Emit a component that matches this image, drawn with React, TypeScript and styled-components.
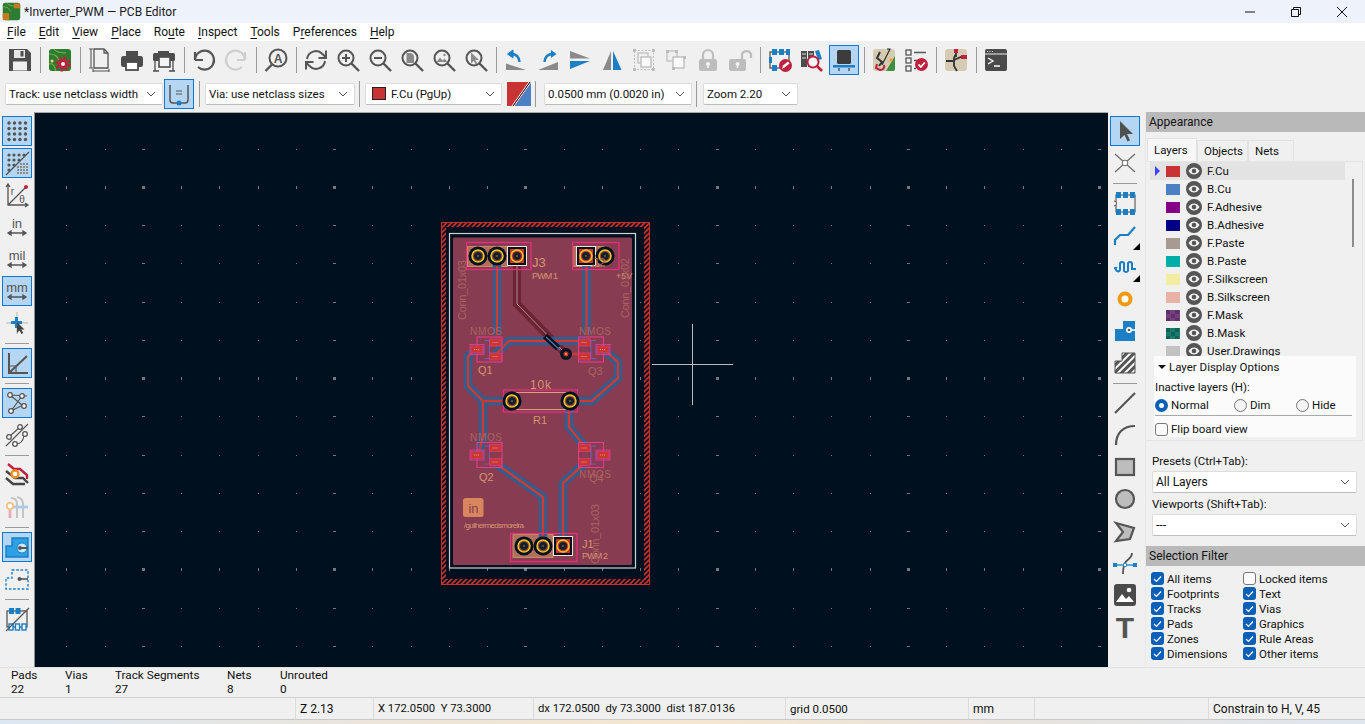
import React from "react";
import styled, { createGlobalStyle } from "styled-components";

const G = "#555555";
const B = "#1a7fc4";
const R = "#c0203f";
const L = "#bdbdbd";
const FONT = `Roboto, "Liberation Sans", sans-serif`;

const Global = createGlobalStyle`
  html, body { margin: 0; padding: 0; background: #f0f0f0; overflow: hidden; }
  * { box-sizing: border-box; }
`;

const Shell = styled.div`
  width: 1365px; height: 724px; display: flex; flex-direction: column; overflow: hidden;
  font: 12px/16px ${FONT}; color: #111; background: #f0f0f0;
`;
const TitleBar = styled.div`
  height: 23px; flex: none; display: flex; align-items: center; padding-left: 2px; background: #eef2fb; font-size: 12px;
`;
const TitleText = styled.span`
  margin-left: 3px; flex: 1; color: #1a1a1a;
`;
const WinButton = styled.div`
  width: 46px; height: 23px; display: flex; align-items: center; justify-content: center;
`;
const MenuBar = styled.div`
  height: 18px; flex: none; background: #fff; display: flex; align-items: center; padding-left: 7px; gap: 13px; font-size: 12px;
  u { text-underline-offset: 2px; }
`;
const ToolRow = styled.div<{ $h: number; $pad: string }>`
  height: ${p => p.$h}px; flex: none; display: flex; align-items: center; padding: ${p => p.$pad}; background: #f0f0f0;
`;
const Sep = styled.div`
  width: 8px; height: 26px; flex: none; display: flex; justify-content: center;
  &::before { content: ""; width: 1px; background: #9a9a9a; }
`;
const HSep = styled.div`
  height: 8px; width: 32px; flex: none; display: flex; align-items: center; padding: 0 4px;
  &::before { content: ""; height: 1px; flex: 1; background: #9a9a9a; }
`;
const ToolButton = styled.div<{ $on?: boolean; $corner?: boolean }>`
  position: relative; width: 32px; height: 32px; flex: none; display: flex; align-items: center; justify-content: center;
  svg { display: block; }
  ${p => p.$on && `
    &::before { content: ""; position: absolute; inset: 1px; background: #b4d6f3; border: 1px solid #0a78d4; }
    svg { position: relative; }
  `}
  ${p => p.$corner && `
    &::after { content: ""; position: absolute; right: 1px; bottom: 1px; border-style: solid; border-width: 0 0 7px 7px; border-color: transparent transparent #000 transparent; }
  `}
`;
const Combo = styled.div<{ $w: number; $ml?: number }>`
  width: ${p => p.$w}px; margin-left: ${p => p.$ml ?? 0}px; height: 22px; flex: none; background: #fff; border: 1px solid #dcdcdc; border-bottom-color: #bdbdbd;
  border-radius: 2px; display: flex; align-items: center; padding: 0 6px 0 3px; gap: 5px; font-size: 11.5px; white-space: nowrap; overflow: hidden;
`;
const ComboText = styled.span`
  flex: 1;
`;
const Swatch = styled.span<{ $c: string }>`
  width: 14px; height: 13px; flex: none; background: ${p => p.$c}; border: 1px solid #222; margin-left: 3px;
`;
const PairSwatch = styled.div`
  width: 24px; height: 24px; margin-left: 5px; flex: none;
`;
const Main = styled.div`
  height: 555px; flex: none; display: flex;
`;
const SideBar = styled.div<{ $w: number }>`
  width: ${p => p.$w}px; flex: none; display: flex; flex-direction: column; align-items: flex-start; padding: 3px 0 0 1px; background: #f0f0f0;
`;
const Canvas = styled.div`
  width: 1074px; flex: none; background: #00101f; border-top: 1px solid #a8a8a8; border-left: 1px solid #8f8f8f; overflow: hidden;
  svg { display: block; }
`;
const Panel = styled.div`
  width: 220px; flex: none; display: flex; flex-direction: column; border-left: 1px solid #e8e8e8;
`;
const PanelHead = styled.div<{ $mt?: number }>`
  height: 20px; flex: none; background: #b9b9b9; display: flex; align-items: center; padding-left: 3px; font-size: 12px; margin-top: ${p => p.$mt ?? 0}px;
`;
const Tabs = styled.div`
  display: flex; align-items: flex-end; height: 29px; padding-left: 1px; flex: none;
`;
const Tab = styled.div<{ $on?: boolean; $w: number }>`
  width: ${p => p.$w}px; height: ${p => (p.$on ? 23 : 21)}px; display: flex; align-items: center; padding-left: 6px; font-size: 11.5px;
  background: ${p => (p.$on ? "#f7f7f7" : "#f0f0f0")}; border: 1px solid #e2e2e2; border-bottom: 0;
`;
const TabBody = styled.div`
  width: 217px; height: 280px; flex: none; border: 1px solid #e4e4e4; border-left: 0; padding: 0 0 0 4px; display: flex; flex-direction: column;
`;
const LayerList = styled.div`
  position: relative; height: 194px; flex: none; overflow: hidden;
`;
const LayerRow = styled.div<{ $on?: boolean }>`
  width: 195px; height: 18px; display: flex; align-items: center; font-size: 11.5px; background: ${p => (p.$on ? "#e3e3e3" : "transparent")};
`;
const Arrow = styled.span<{ $on?: boolean }>`
  width: 16px; flex: none; padding-left: 5px; display: flex;
  &::before { content: ""; border-style: solid; border-width: 5px 0 5px 5px; border-color: transparent transparent transparent ${p => (p.$on ? "#4040ff" : "transparent")}; }
`;
const LayerSwatch = styled.span<{ $c: string; $check?: string }>`
  width: 14px; height: 11px; flex: none; margin-right: 6px; background-color: ${p => p.$c};
  ${p => p.$check && `background-image: conic-gradient(${p.$check} 25%, transparent 0 50%, ${p.$check} 0 75%, transparent 0); background-size: 9px 8px;`}
`;
const LayerName = styled.span`
  margin-left: 5px;
`;
const ScrollThumb = styled.div`
  position: absolute; left: 202px; top: 17px; width: 2px; height: 68px; background: #8d8d8d;
`;
const Options = styled.div`
  width: 202px; margin-left: 4px; height: 81px; flex: none; background: #fbfbfb; padding-left: 1px; font-size: 11.5px; display: flex; flex-direction: column;
`;
const OptHead = styled.div`
  height: 17px; display: flex; align-items: center; gap: 3px; padding-left: 3px; margin-top: 3px;
  &::before { content: ""; border-style: solid; border-width: 4px 4px 0; border-color: #111 transparent transparent; }
`;
const OptLabel = styled.div`
  margin-top: 3px; height: 16px; line-height: 18px;
`;
const RadioRow = styled.div`
  display: flex; height: 18px; align-items: center; margin-top: 3px;
`;
const RadioItem = styled.div<{ $w: number }>`
  width: ${p => p.$w}px; display: flex; align-items: center; gap: 3px;
`;
const Radio = styled.span<{ $on?: boolean }>`
  width: 13px; height: 13px; border-radius: 50%; flex: none;
  ${p => p.$on ? `border: 4px solid #0a5fb8; background: #fff;` : `border: 1px solid #777; background: #f4f4f4;`}
`;
const Rule = styled.div`
  height: 1px; background: #a9a9a9; margin: 2px 4px 0 0;
`;
const CheckBox = styled.span<{ $on?: boolean }>`
  width: 13px; height: 13px; border-radius: 3px; flex: none; display: flex; align-items: center; justify-content: center;
  ${p => p.$on ? `background: #0a5fb8;` : `background: #fbfbfb; border: 1px solid #777;`}
`;
const FlipRow = styled.div`
  display: flex; align-items: center; gap: 3px; margin-top: 5px;
`;
const FieldLabel = styled.div<{ $mt: number }>`
  padding-left: 6px; margin-top: ${p => p.$mt}px; height: 17px; font-size: 11.5px;
`;
const PanelCombo = styled(Combo)`
  margin: 1px 0 0 6px; font-size: 12px; padding-left: 3px;
`;
const FilterGrid = styled.div`
  display: grid; grid-template-columns: 92px 1fr; grid-auto-rows: 15px; padding: 5px 0 0 5px; font-size: 11.5px;
`;
const FilterItem = styled.div`
  display: flex; align-items: center; gap: 3px;
`;
const MsgPanel = styled.div`
  height: 30px; flex: none; display: flex; padding-left: 11px; border-top: 1px solid #e2e2e2; font-size: 11.75px; line-height: 14px;
`;
const MsgCol = styled.div<{ $w: number }>`
  width: ${p => p.$w}px; flex: none;
`;
const StatusBar = styled.div`
  height: 23px; flex: none; display: flex; align-items: center; border-top: 1px solid #d2d2d2; border-bottom: 1px solid #c9c9c9;
`;
const StatusCell = styled.div<{ $w: number; $first?: boolean; $fs: number }>`
  width: ${p => p.$w}px; flex: none; height: 21px; display: flex; align-items: center; padding-left: 4px; white-space: pre; font-size: ${p => p.$fs}px;
  border-left: ${p => (p.$first ? "0" : "1px solid #dcdcdc")};
`;
const Taskbar = styled.div`
  height: 4px; flex: none; background: linear-gradient(90deg, #dbe7f3 0%, #ede5d8 30%, #f5e6cf 50%, #e7e3de 75%, #dfe6ee 100%);
`;
const BoardText = styled.text<{ $size?: number; $dim?: boolean }>`
  font-family: "Liberation Sans", sans-serif; font-size: ${p => p.$size ?? 10}px; fill: ${p => (p.$dim ? "#a8635f" : "#d69470")};
`;
const IconText = styled.text<{ $size: number; $bold?: boolean; $c?: string }>`
  font-family: "Liberation Sans", sans-serif; font-size: ${p => p.$size}px; font-weight: ${p => (p.$bold ? 700 : 400)}; fill: ${p => p.$c ?? G};
  text-anchor: middle;
`;

const S = (p: React.SVGProps<SVGPathElement>) => <path fill="none" stroke={G} strokeWidth={2} {...p} />;

const Mag = ({ c = G, children }: { c?: string; children?: React.ReactNode }) => (
  <>
    <circle cx="10" cy="10" r="7.5" fill="none" stroke={c} strokeWidth="2" />
    <path d="M15.5 15.5L23 23" stroke={c} strokeWidth="2.4" />
    {children}
  </>
);
const Arrows = ({ y = 18 }: { y?: number }) => (
  <path d={`M3 ${y}h18M6 ${y - 2}l-3 2 3 2zM18 ${y - 2}l3 2-3 2z`} stroke={G} strokeWidth="1.3" fill={G} />
);
const Dots = () => (
  <g fill={G}>
    {[4, 9.5, 15, 20.5].flatMap(y => [4, 9.5, 15, 20.5].map(x => <circle key={`${x}-${y}`} cx={x} cy={y} r="1.7" />))}
  </g>
);
const PcbBack = () => (
  <>
    <rect x="1" y="1" width="22" height="22" rx="3" fill="#2c7d32" />
    <path d="M1 6c6 0 8 2 10 6M6 1c2 3 5 4 12 4M1 16c4-1 5 1 7 7" fill="none" stroke="#7cb342" strokeWidth="1.1" />
  </>
);

const icons: Record<string, React.ReactNode> = {
  save: <><path d="M1 1h18l4 4v18H1z" fill="#4f4f4f" /><rect x="6" y="2" width="11" height="8" fill="#e6e6e6" /><rect x="12.5" y="3" width="3" height="5.5" fill="#4f4f4f" /><rect x="5" y="13.5" width="14" height="9" fill="#f0f0f0" /></>,
  pcbgear: <><PcbBack /><circle cx="4" cy="13" r="1.5" fill="#ffd27f" /><circle cx="15" cy="16" r="6.5" fill="none" stroke={R} strokeWidth="2.6" strokeDasharray="2.5 2.6" /><circle cx="15" cy="16" r="5" fill={R} /><circle cx="15" cy="16" r="2" fill="#eee" /></>,
  doc: <><path d="M6 1h10l4 4v15H6zM16 1v4h4" fill="none" stroke={G} strokeWidth="1.3" /><path d="M3 1v19M1 1h4M1 20h4M5 23h16M5 21v3M21 21v3" stroke={G} strokeWidth="1.1" fill="none" /></>,
  print: <><rect x="6" y="3" width="12" height="5" fill="#4c4c4c" /><rect x="1" y="8" width="22" height="11" rx="2.5" fill="#4c4c4c" /><rect x="6" y="14" width="12" height="8" fill="#fff" stroke="#4c4c4c" strokeWidth="1.8" /></>,
  plot: <><rect x="1" y="5" width="22" height="8" rx="1.5" fill="#4c4c4c" /><rect x="6" y="3" width="11" height="3" fill="#4c4c4c" /><rect x="7" y="9" width="11" height="10" fill="#f4f4f4" stroke="#4c4c4c" strokeWidth="1.6" /><path d="M3 13v10M21 13v10M1 23h6M17 23h6" stroke="#4c4c4c" strokeWidth="1.3" fill="none" /></>,
  undo: <><S d="M3 12V4M3 12h8" strokeWidth={2.2} /><S d="M3 12a9.5 9.5 0 1 1 3 7" strokeWidth={2.2} /></>,
  redo: <><S d="M21 12V4M21 12h-8" stroke="#cfcfcf" strokeWidth={2.2} /><S d="M21 12a9.5 9.5 0 1 0-3 7" stroke="#cfcfcf" strokeWidth={2.2} /></>,
  find: <><circle cx="14" cy="10" r="8.5" fill="none" stroke={G} strokeWidth="2" /><path d="M8 16.5L1.5 23" stroke={G} strokeWidth="2.4" /><IconText x="14" y="14.5" $size={12} $bold>A</IconText></>,
  refresh: <><S d="M3 11a9 9 0 0 1 15.5-5L22 9.5" /><S d="M22 2.5v7.5h-7.5" /><S d="M21 13a9 9 0 0 1-15.5 5L2 14.500" /><S d="M2 21.500V14h7.500" /></>,
  zoomin: <Mag><path d="M6 10h8M10 6v8" stroke={G} strokeWidth="2" /></Mag>,
  zoomout: <Mag><path d="M6 10h8" stroke={G} strokeWidth="2" /></Mag>,
  zoompage: <Mag><path d="M6.500 5h5l2.500 2.500V15H6.500z" fill="#8a8a8a" /></Mag>,
  zoomobj: <Mag><path d="M4.500 14l3.500-4.500 2.500 3 2-2 3 3.500z" fill="#8a8a8a" /><circle cx="12.500" cy="7" r="1.200" fill="#8a8a8a" /></Mag>,
  zoomsel: <Mag><path d="M7 4.500v11l2.800-2.500 2 3.500 1.500-1-2-3.500h3.700z" fill="#8a8a8a" /></Mag>,
  rotccw: <><path d="M2 15.500L22 22H2z" fill="#8a8a8a" /><path d="M9 2L3.500 6 9 10z" fill={B} stroke={B} strokeWidth="1" /><path d="M7 6c5 0 8 2 8.500 8" fill="none" stroke={B} strokeWidth="2.400" /></>,
  rotcw: <><path d="M22 14v8H2z" fill="#8a8a8a" /><path d="M15 2l5.500 4L15 10z" fill={B} /><path d="M17 6c-5 0-8 2-8.500 8" fill="none" stroke={B} strokeWidth="2.400" /></>,
  fliph: <><path d="M2 3l20 7.500H2z" fill="#8a8a8a" /><path d="M2 13h20L2 21z" fill={B} /></>,
  flipv: <><path d="M11 3v19H3z" fill="#8a8a8a" /><path d="M13 3l8.500 19H13z" fill={B} /></>,
  group: <><rect x="2.500" y="2.500" width="19" height="19" fill="none" stroke={L} strokeWidth="1" strokeDasharray="2 1.500" /><rect x="1" y="1" width="3" height="3" fill={L} /><rect x="20" y="20" width="3" height="3" fill={L} /><rect x="20" y="1" width="3" height="3" fill={L} /><rect x="1" y="20" width="3" height="3" fill={L} /><rect x="6" y="5" width="10" height="10" fill="none" stroke={L} strokeWidth="1.200" /><rect x="9" y="9" width="10" height="10" fill="#fafafa" stroke={L} strokeWidth="1.400" /></>,
  ungroup: <><rect x="3" y="3" width="10" height="10" fill="none" stroke={L} strokeWidth="1.200" /><rect x="9" y="9" width="11" height="11" fill="#fafafa" stroke={L} strokeWidth="1.400" /><rect x="2" y="2" width="3" height="3" fill={L} /><rect x="11" y="2" width="3" height="3" fill={L} /><rect x="19" y="8" width="3" height="3" fill={L} /><rect x="8" y="19" width="3" height="3" fill={L} /></>,
  lock: <><path d="M7 11V7a5 5 0 0 1 10 0v4" fill="none" stroke={L} strokeWidth="2.200" /><rect x="3" y="11" width="18" height="12" rx="2" fill={L} /><circle cx="12" cy="16" r="2" fill="#f4f4f4" /><rect x="11.200" y="16" width="1.600" height="4" fill="#f4f4f4" /></>,
  unlock: <><path d="M14 11V6a5 5 0 0 1 9 0v4" fill="none" stroke={L} strokeWidth="2.200" /><rect x="1" y="11" width="17" height="12" rx="2" fill={L} /><circle cx="9.500" cy="16" r="2" fill="#f4f4f4" /><rect x="8.700" y="16" width="1.600" height="4" fill="#f4f4f4" /></>,
  drc: <><rect x="2" y="4" width="19" height="16" fill="none" stroke={G} strokeWidth="1.300" /><g fill={B}><rect x="4" y="1" width="5" height="6" /><rect x="11" y="1" width="5" height="6" /><rect x="18" y="1" width="4" height="6" /><rect x="4" y="17" width="5" height="6" /><rect x="1" y="9" width="3" height="6" /></g><circle cx="17.500" cy="17.500" r="6.500" fill={R} /><path d="M14 21l1-3.500 5-4 1.500 2-5 4z" fill="#fff" /></>,
  lib: <><rect x="1" y="3" width="6" height="16" fill="#4c4c4c" /><rect x="8" y="3" width="6" height="16" fill="#4c4c4c" /><path d="M15 3l4-1 3 9-4 1z" fill={B} /><path d="M2 6h4M9 6h4M2 10h4M9 10h4" stroke="#ddd" /><circle cx="13" cy="14" r="5.500" fill="#fafafa" stroke={R} strokeWidth="2" /><path d="M17 18l5 5" stroke={R} strokeWidth="2.600" /></>,
  board3d: <><rect x="5" y="2" width="14" height="14" rx="1.500" fill="#3c3c3c" /><rect x="1" y="17" width="22" height="2.500" fill={B} /><path d="M7 20v3M17 20v3" stroke={G} strokeWidth="1.500" /></>,
  script: <><rect x="1" y="1" width="22" height="22" rx="3" fill="#d5cbb2" /><path d="M14 23L23 8v13a2 2 0 0 1-2 2z" fill="#3f8f3f" /><path d="M15 1h3l-8 16" stroke="#222" strokeWidth="1.100" fill="none" /><circle cx="19" cy="12" r="1.800" fill="#f0a030" /><path d="M8 4l-3 6 5 4-3 4" stroke="#333" strokeWidth="2" fill="none" /><path d="M5 16l-1 4 4 2c3 0 5-2 4-5" stroke={R} strokeWidth="2" fill="none" /></>,
  checklist: <><g fill="none" stroke={G} strokeWidth="1.300"><rect x="2" y="2" width="5" height="5" /><rect x="2" y="10" width="5" height="5" /><rect x="2" y="18" width="5" height="5" /></g><path d="M10 4.500h12M10 12.500h5M10 20.500h2" stroke={G} strokeWidth="1.300" /><circle cx="17.500" cy="16.500" r="6.500" fill={R} /><path d="M14.500 16.500l2.300 2.500 4-4.500" fill="none" stroke="#fff" strokeWidth="1.800" /></>,
  schem: <><rect x="1" y="1" width="22" height="22" rx="3" fill="#d5cbb2" /><path d="M12 1v8M2 13h8M12 6l-2 4v8l3 5M10 12l7-3h6" stroke="#333" strokeWidth="1.800" fill="none" /><rect x="10" y="1" width="4" height="4" fill={R} /><rect x="17" y="7" width="6" height="4" fill={R} /></>,
  console: <><rect x="1" y="1" width="22" height="22" rx="2" fill="#4a4a4a" /><path d="M1 6h22" stroke="#eee" strokeWidth="1" /><path d="M3 3.500h1M5.500 3.500h1M8 3.500h1" stroke="#eee" /><path d="M4 10l5 3-5 3M10 18h6" fill="none" stroke="#fff" strokeWidth="1.300" /></>,
  grid: <Dots />,
  gridover: <><g fill={G}>{[4, 9, 14, 19].flatMap(y => [4, 9, 14, 19].filter(x => x + y < 24).map(x => <circle key={`${x}-${y}`} cx={x} cy={y} r="1.600" />))}</g><g fill="#8a8a8a">{[13, 16, 19, 22].flatMap(y => [13, 16, 19, 22].filter(x => x + y > 28).map(x => <rect key={`${x}-${y}`} x={x - 1} y={y - 1} width="2" height="2" />))}</g><path d="M1 24L24 1" stroke={G} strokeWidth="1.200" /></>,
  polar: <><path d="M3 1v21h20M3 22L21 4M1 4l2-3 2 3M20 20l3 2-3 2" fill="none" stroke={G} strokeWidth="1.300" /><circle cx="21" cy="4" r="2" fill={R} /><IconText x="7.500" y="12" $size={10}>r</IconText><IconText x="17" y="20" $size={10}>θ</IconText></>,
  inch: <><IconText x="12" y="13" $size={13}>in</IconText><Arrows /></>,
  mil: <><IconText x="12" y="13" $size={13}>mil</IconText><Arrows /></>,
  mm: <><IconText x="12" y="13" $size={13}>mm</IconText><Arrows /></>,
  cursor: <><path d="M12 1v22M1 12h22" stroke="#b5b5b5" strokeWidth="1" /><path d="M11.500 6v11M6 11.500h11" stroke={B} strokeWidth="3" /><path d="M12 11v11l2.500-2.500 2 3.500 1.800-1-2-3.500H19.500z" fill="#444" /></>,
  angle: <><path d="M4 2v20h19" stroke={G} strokeWidth="2" fill="none" /><path d="M4 22L22 5" stroke={G} strokeWidth="2" /><path d="M4 15h7v7" stroke={G} strokeWidth="1.200" fill="none" /></>,
  ratsnest: <><path d="M5 4l12 10M5 4l17 1M17 5L6 20M6 20l12-6" stroke={G} strokeWidth="1.200" /><g fill="#fff" stroke={G} strokeWidth="1.300"><circle cx="5" cy="4" r="2.300" /><circle cx="17" cy="5" r="2.300" /><circle cx="6" cy="20" r="2.300" /><circle cx="19" cy="15" r="2.300" /></g></>,
  curved: <><path d="M1 23L23 1" stroke={G} strokeWidth="1.100" /><path d="M5 13L14 5M11 21c5 0 7-3 8-8" stroke={G} strokeWidth="1.200" fill="none" /><g fill="#fff" stroke={G} strokeWidth="1.300"><circle cx="4" cy="14" r="2.300" /><circle cx="15" cy="4" r="2.300" /><circle cx="10" cy="21" r="2.300" /><circle cx="20" cy="11" r="2.300" /></g></>,
  hc: <><path d="M3 1l6 5h6l7 6v4" stroke={R} strokeWidth="2.400" fill="none" /><path d="M1 8l9 7h8l5 5" stroke="#444" strokeWidth="2.400" fill="none" /><path d="M1 15l7 6h12" stroke="#444" strokeWidth="2.400" fill="none" /><circle cx="10" cy="11" r="3.500" fill="#fff" stroke="#f09020" strokeWidth="2.400" /></>,
  hcdim: <><path d="M12 23V9c0-4-2-6-6-6M18 23V9c0-3-2-6-6-7" stroke="#c4c4c4" strokeWidth="2" fill="none" /><path d="M5 23v-9" stroke="#e8aab5" strokeWidth="2.800" /><path d="M8 12h15" stroke="#a6cbe6" strokeWidth="2.800" /><circle cx="5" cy="11" r="3.200" fill="#fff" stroke="#f5c488" strokeWidth="2" /></>,
  zonefill: <><path d="M7 3h16v19H1V11h6z" fill="#2ba0e5" stroke={B} strokeWidth="1.400" /><circle cx="17" cy="13" r="5" fill="#cfe8f8" stroke={B} /><path d="M15 13h8" stroke={G} strokeWidth="2" /><circle cx="15" cy="13" r="2" fill={G} /></>,
  zoneout: <><path d="M7 3h16v19H1V11h6z" fill="none" stroke={B} strokeWidth="1.400" strokeDasharray="2.500 1.800" /><path d="M13 12h10" stroke={G} strokeWidth="1.600" /><circle cx="14.500" cy="12" r="2" fill={G} /></>,
  fphide: <><rect x="2" y="4" width="20" height="16" fill="none" stroke={G} strokeWidth="1.300" /><g fill={B}><rect x="4" y="1" width="5" height="6" /><rect x="10.500" y="1" width="5" height="6" /></g><g fill="#fff" stroke={B} strokeWidth="1.400"><rect x="4" y="17" width="4" height="6" /><rect x="10.500" y="17" width="4" height="6" /><rect x="17" y="17" width="4" height="6" /></g><path d="M1 24L24 1" stroke={G} strokeWidth="1.300" /></>,
  select: <path d="M7 2v18l4.500-4 3 6.500 2.500-1.200-3-6.300h6z" fill="#505050" />,
  local: <><path d="M2 3l20 18M22 3L2 21" stroke="#6e6e6e" strokeWidth="1.300" /><circle cx="12" cy="12" r="2.800" fill="#fff" stroke="#6e6e6e" /></>,
  footprint: <><rect x="3" y="4" width="19" height="17" fill="none" stroke={G} strokeWidth="1.100" /><path d="M1 10a2.500 2.500 0 0 1 0 5" fill="#f0f0f0" stroke={G} /><g fill={B}><rect x="3" y="1" width="5" height="6" /><rect x="10" y="1" width="5" height="6" /><rect x="17" y="1" width="5" height="6" /><rect x="3" y="18" width="5" height="6" /><rect x="10" y="18" width="5" height="6" /><rect x="17" y="18" width="5" height="6" /></g></>,
  route: <path d="M2 22V17l5-5h8l7-8" fill="none" stroke={B} strokeWidth="2.200" />,
  tune: <path d="M1 13h2a2 2 0 0 0 4 2V8a2.500 2.500 0 0 1 4 0v8a2.500 2.500 0 0 0 4 0V8a2.500 2.500 0 0 1 4 0v6h4" fill="none" stroke={B} strokeWidth="2" />,
  via: <circle cx="12" cy="12" r="5.500" fill="#fff" stroke="#f09a10" strokeWidth="4" />,
  pad: <><path d="M10 2h12v20H2V10h8z" fill={B} /><circle cx="16" cy="11" r="3" fill="#fff" /><path d="M16 11h7" stroke="#fff" strokeWidth="1.600" /><circle cx="16" cy="11" r="1.300" fill={G} /></>,
  zonehatch: <><defs><pattern id="hatchIcon" width="5" height="5" patternUnits="userSpaceOnUse" patternTransform="rotate(45)"><rect width="5" height="5" fill="#fff" /><rect width="3" height="5" fill={G} /></pattern></defs><path d="M9 2h13v20H2V10h7z" fill="url(#hatchIcon)" stroke={G} /></>,
  line: <path d="M2 22L22 2" stroke={G} strokeWidth="2.200" />,
  arc: <path d="M3 22C3 10 10 3 22 3" fill="none" stroke={G} strokeWidth="2.200" />,
  rect: <rect x="3" y="4" width="18" height="16" fill="#bdbdbd" stroke={G} strokeWidth="2.200" />,
  circle: <circle cx="12" cy="12" r="9" fill="#bdbdbd" stroke={G} strokeWidth="2.200" />,
  poly: <path d="M3 4l18 5-4 11-14 2 7-9z" fill="#bdbdbd" stroke={G} strokeWidth="2.200" />,
  measure: <><path d="M1 14h22" stroke={B} strokeWidth="1.300" /><rect x="0" y="12" width="4" height="4" fill={B} /><rect x="20" y="12" width="4" height="4" fill={B} /><path d="M19 2c0 6-5 6-7 10s-2 6-2 11" fill="none" stroke={G} strokeWidth="1.800" /><circle cx="12" cy="14" r="1.800" fill="#fff" stroke={B} /></>,
  image: <><rect x="1" y="1" width="22" height="22" rx="3" fill="#4a4a4a" /><path d="M3 19l6-8 4 5 3-3 5 6z" fill="#fff" /><circle cx="16" cy="7" r="2.300" fill="#fff" /></>,
  text: <IconText x="12" y="23" $size={30} $bold>T</IconText>,
};

const Icon = ({ name }: { name: string }) => (
  <svg width="24" height="24" viewBox="0 0 24 24" overflow="visible">{icons[name]}</svg>
);

const Chevron = () => (
  <svg width="10" height="6" viewBox="0 0 10 6"><path d="M1 1l4 4 4-4" fill="none" stroke="#555" strokeWidth="1" /></svg>
);
const Tick = () => (
  <svg width="9" height="8" viewBox="0 0 9 8"><path d="M1 4l2.500 2.500L8 1.500" fill="none" stroke="#fff" strokeWidth="1.200" /></svg>
);
const Eye = () => (
  <svg width="16" height="16" viewBox="0 0 16 16" style={{ flex: "none" }}>
    <circle cx="8" cy="8" r="8" fill="#555" />
    <path d="M2.500 8C4 5.500 6 4.500 8 4.500S12 5.500 13.500 8C12 10.500 10 11.500 8 11.500S4 10.500 2.500 8z" fill="#f2f2f2" />
    <circle cx="8" cy="8" r="2.300" fill="#555" />
  </svg>
);

type ToolDef = string | { n: string; on?: boolean; corner?: boolean };
const renderTools = (list: ToolDef[], sep: React.ReactNode) =>
  list.map((t, i) => {
    if (t === "|") return <React.Fragment key={i}>{sep}</React.Fragment>;
    const d = typeof t === "string" ? { n: t } : t;
    return <ToolButton key={i} $on={d.on} $corner={d.corner}><Icon name={d.n} /></ToolButton>;
  });

const topTools: ToolDef[] = ["save", "|", "pcbgear", "|", "doc", "print", "plot", "|", "undo", "redo", "|", "find", "|", "refresh", "zoomin", "zoomout", "zoompage", "zoomobj", "zoomsel", "|", "rotccw", "rotcw", "fliph", "flipv", "group", "ungroup", "lock", "unlock", "|", "drc", "lib", { n: "board3d", on: true }, "|", "script", "checklist", "|", "schem", "|", "console"];
const leftTools: ToolDef[] = [{ n: "grid", on: true }, { n: "gridover", on: true }, "polar", "inch", "mil", { n: "mm", on: true }, "cursor", "|", { n: "angle", on: true }, "|", { n: "ratsnest", on: true }, "curved", "|", "hc", "hcdim", "|", { n: "zonefill", on: true }, "zoneout", "|", "fphide"];
const rightTools: ToolDef[] = [{ n: "select", on: true }, "local", "|", "footprint", { n: "route", corner: true }, { n: "tune", corner: true }, "via", "pad", "zonehatch", "|", "line", "arc", "rect", "circle", "poly", "measure", "image", "text"];

const menus: [string, string, string][] = [["", "F", "ile"], ["", "E", "dit"], ["", "V", "iew"], ["", "P", "lace"], ["Ro", "u", "te"], ["", "I", "nspect"], ["", "T", "ools"], ["P", "r", "eferences"], ["", "H", "elp"]];

const layers: { n: string; c: string; k?: string }[] = [
  { n: "F.Cu", c: "#c83434" }, { n: "B.Cu", c: "#4d7fc4" }, { n: "F.Adhesive", c: "#840084" }, { n: "B.Adhesive", c: "#000084" },
  { n: "F.Paste", c: "#a89a93" }, { n: "B.Paste", c: "#00aea8" }, { n: "F.Silkscreen", c: "#f2eda1" }, { n: "B.Silkscreen", c: "#e8b2a7" },
  { n: "F.Mask", c: "#5e3168", k: "#74407e" }, { n: "B.Mask", c: "#0a6559", k: "#1c7a6d" }, { n: "User.Drawings", c: "#c2c2c2" },
];
const filters: [string, boolean][] = [["All items", true], ["Locked items", false], ["Footprints", true], ["Text", true], ["Tracks", true], ["Vias", true], ["Pads", true], ["Graphics", true], ["Zones", true], ["Rule Areas", true], ["Dimensions", true], ["Other items", true]];
const msgs: [string, string, number][] = [["Pads", "22", 54], ["Vias", "1", 50], ["Track Segments", "27", 112], ["Nets", "8", 53], ["Unrouted", "0", 80]];
const status: [string, number, number][] = [["", 295, 12], ["Z 2.13", 78, 12], ["X 172.0500  Y 73.3000", 160, 11.25], ["dx 172.0500  dy 73.3000  dist 187.0136", 252, 11.25], ["grid 0.0500", 183, 11.5], ["mm", 66, 12], ["", 174, 12], ["Constrain to H, V, 45", 157, 12]];

const gridDots = () => {
  const out: React.ReactNode[] = [];
  for (let i = 0; i < 28; i++) {
    for (let j = 0; j < 14; j++) {
      const fx = 143.3 + (i - 2) * 38.25;
      const fy = 187.3 + (j - 1) * 38.25;
      const x = Math.floor(fx);
      const y = Math.floor(fy);
      const mx = (i - 2) % 5 === 0;
      const my = (j - 1) % 5 === 0;
      out.push(<rect key={`${i}-${j}`} x={x - (mx ? 1 : 0)} y={y - (my ? 1 : 0)} width={mx ? 3 : 1} height={my ? 3 : 1} fill="#6e7980" />);
    }
  }
  return out;
};

const Through = ({ x, y, sq }: { x: number; y: number; sq?: boolean }) => (
  <g>
    {sq ? (
      <>
        <rect x={x - 9.500} y={y - 9.500} width="19" height="19" fill="#00101f" stroke="#e9e6d8" strokeWidth="1" />
        <rect x={x - 7} y={y - 7} width="14" height="14" fill="#c9342c" />
      </>
    ) : (
      <circle cx={x} cy={y} r="9.500" fill="#02101e" />
    )}
    <circle cx={x} cy={y} r="6" fill={sq ? "#c9342c" : "#9a5030"} stroke="#e8c52a" strokeWidth="1.500" />
    <circle cx={x} cy={y} r="4" fill="#15202c" />
    <circle cx={x} cy={y} r="0.800" fill="#b88a50" />
  </g>
);
const Smd = ({ x, y }: { x: number; y: number }) => (
  <g>
    <rect x={x - 6} y={y - 3.500} width="12" height="7" fill="#cc3630" stroke="#f038b0" strokeWidth="0.500" />
    <path d={`M${x - 3} ${y}h6`} stroke="#d9a08a" strokeWidth="1" strokeDasharray="1 1" />
  </g>
);
const Fet = ({ x, y, gateX, flip }: { x: number; y: number; gateX: number; flip?: boolean }) => (
  <g>
    <rect x={x - 12.500} y={y - 12.500} width="25" height="25" fill="none" stroke="#ec3d8d" strokeWidth="1" />
    <path d={`M${x - 5} ${y - 9}h10M${x - 5} ${y + 9}h10M${x} ${y - 8}v16`} stroke="#5a70d0" strokeWidth="0.800" fill="none" />
    <rect x={gateX - 7} y={y - 5} width="14" height="10" fill="none" stroke="#ec3d8d" strokeWidth="0.800" />
    <path d={`M${gateX + (flip ? -7 : 7)} ${y - 4}v8`} stroke="#5060d0" strokeWidth="1" />
    <Smd x={gateX} y={y} />
    <Smd x={x + (flip ? -6.500 : 6)} y={y - 7} />
    <Smd x={x + (flip ? -6.500 : 6)} y={y + 7} />
  </g>
);

const tracks = [
  "M497 256V335", "M586.500 256V335",
  "M495 355L509 341H586", "M512 401H483L468 386V356L477 349",
  "M570 401H592L618 378V362L603 349",
  "M483 401V437L478 455", "M494 462L543 497V546",
  "M569 401V427L586 448", "M586 462L563 483V546",
];

const Board = () => (
  <svg width="1073" height="554" viewBox="35 113 1073 554">
    <defs>
      <pattern id="hatch" width="3.500" height="3.500" patternUnits="userSpaceOnUse" patternTransform="rotate(45)">
        <rect width="3.500" height="3.500" fill="#00101f" />
        <rect width="1.800" height="3.500" fill="#c4302b" />
      </pattern>
    </defs>
    <g shapeRendering="crispEdges">{gridDots()}</g>
    <path d="M441 222H649V584H441zM446 227V579H644V227z" fill="url(#hatch)" fillRule="evenodd" />
    <rect x="441.500" y="222.500" width="208" height="362" fill="none" stroke="#c4302b" strokeWidth="1" />
    <rect x="449.500" y="233.500" width="186" height="334.500" fill="none" stroke="#cfd3d3" strokeWidth="1.200" />
    <rect x="453" y="237.500" width="179" height="327.500" rx="1.500" fill="#883c52" />

    <rect x="467.500" y="246.500" width="40" height="20" fill="#b0705c" stroke="#c98a6a" />
    <rect x="572.500" y="246.500" width="32" height="20" fill="#b0705c" stroke="#c98a6a" />
    <rect x="513" y="534.500" width="40" height="23" fill="#b0705c" stroke="#c98a6a" />

    <path d="M517 262V304L566 354" fill="none" stroke="#6d2333" strokeWidth="8" />
    <path d="M517 262V304L566 354" fill="none" stroke="#a98a9a" strokeWidth="1" />

    {tracks.map(d => <path key={d} d={d} fill="none" stroke="#315d8f" strokeWidth="8.500" strokeLinejoin="round" />)}
    {tracks.map(d => <path key={d} d={d} fill="none" stroke="#cc3a33" strokeWidth="2.400" />)}
    <path d="M566 354H590" stroke="#cc3a33" strokeWidth="2.400" />
    <path d="M545 336L558 348" stroke="#0a1020" strokeWidth="6" />
    <path d="M546 337L560 350" stroke="#4a7fb0" strokeWidth="1.200" />

    <circle cx="566" cy="354" r="6" fill="#0a1422" />
    <circle cx="566" cy="354" r="2.500" fill="#c9342c" />
    <circle cx="566" cy="354" r="0.900" fill="#e8c52a" />

    <rect x="466.500" y="242.500" width="64.500" height="27" fill="none" stroke="#ec2d7d" strokeWidth="1.200" />
    <rect x="572.500" y="242.500" width="46.500" height="27" fill="none" stroke="#ec2d7d" strokeWidth="1.200" />
    <rect x="510.500" y="533.500" width="66.500" height="28" fill="none" stroke="#ec2d7d" strokeWidth="1.200" />
    <rect x="503.500" y="390" width="74" height="22" fill="none" stroke="#ec2d7d" strokeWidth="1.200" />
    <rect x="512" y="392.500" width="58" height="17" fill="none" stroke="#d9a07a" strokeWidth="1" />

    <Through x={478} y={256} />
    <Through x={497} y={256} />
    <Through x={517} y={256} sq />
    <Through x={586} y={256} sq />
    <Through x={605} y={256} />
    <Through x={512} y={401} />
    <Through x={570} y={401} />
    <Through x={524} y={546} />
    <Through x={543} y={546} />
    <Through x={563} y={546} sq />

    <Fet x={489.500} y={349.500} gateX={477} />
    <Fet x={591} y={349.500} gateX={603} flip />
    <Fet x={489.500} y={455} gateX={477} />
    <Fet x={591} y={455} gateX={603} flip />

    <BoardText x="470" y="335" $dim textLength="32">NMOS</BoardText>
    <BoardText x="579" y="335" $dim textLength="32">NMOS</BoardText>
    <BoardText x="470" y="441" $dim textLength="32">NMOS</BoardText>
    <BoardText x="579" y="478" $dim textLength="32">NMOS</BoardText>
    <BoardText x="478" y="374" $size={11}>Q1</BoardText>
    <BoardText x="588" y="375" $size={11} $dim>Q3</BoardText>
    <BoardText x="479" y="481" $size={11}>Q2</BoardText>
    <BoardText x="589" y="482" $size={11} $dim>Q4</BoardText>
    <BoardText x="530" y="389" $size={12} textLength="21">10k</BoardText>
    <BoardText x="533" y="424" $size={11}>R1</BoardText>
    <BoardText x="532" y="267" $size={13}>J3</BoardText>
    <BoardText x="532" y="279" $size={9} textLength="26">PWM 1</BoardText>
    <BoardText x="592" y="267" $size={13} $dim>J2</BoardText>
    <BoardText x="616" y="279" $size={9}>+5V</BoardText>
    <BoardText x="582" y="548" $size={11}>J1</BoardText>
    <BoardText x="582" y="559" $size={9} textLength="26">PWM 2</BoardText>
    <BoardText $dim $size={11} transform="translate(466 320) rotate(-90)" textLength="60">Conn_01x03</BoardText>
    <BoardText $dim $size={11} transform="translate(629 318) rotate(-90)" textLength="60">Conn_01x02</BoardText>
    <BoardText $dim $size={11} transform="translate(599 564) rotate(-90)" textLength="60">Conn_01x03</BoardText>

    <rect x="463" y="498" width="20.500" height="19" rx="2.500" fill="#d9865f" />
    <IconText x="473.500" y="513" $size={13} $c="#883c52">in</IconText>
    <BoardText x="464" y="528" $size={8} textLength="60">/guilhermedsmoreira</BoardText>

    <path d="M692.500 324V405M652 364.500H733" stroke="#b9bdc0" strokeWidth="1" shapeRendering="crispEdges" />
  </svg>
);

export default function App() {
  return (
    <Shell>
      <Global />
      <TitleBar>
        <svg width="19" height="19" viewBox="0 0 24 24" style={{ flex: "none" }}><PcbBack /><rect x="1" y="14" width="8" height="9" fill="#c87820" /><rect x="15" y="2" width="8" height="6" fill="#c87820" /></svg>
        <TitleText>*Inverter_PWM — PCB Editor</TitleText>
        <WinButton><svg width="12" height="12" viewBox="0 0 12 12"><path d="M1 6h10" stroke="#111" /></svg></WinButton>
        <WinButton><svg width="12" height="12" viewBox="0 0 12 12"><path d="M1.500 3.500h7v7h-7zM3.500 3V1.500h7v7H9" fill="none" stroke="#111" /></svg></WinButton>
        <WinButton><svg width="12" height="12" viewBox="0 0 12 12"><path d="M1 1l10 10M11 1L1 11" stroke="#111" /></svg></WinButton>
      </TitleBar>
      <MenuBar>
        {menus.map(([a, u, b]) => <span key={u + b}>{a}<u>{u}</u>{b}</span>)}
      </MenuBar>
      <ToolRow $h={34} $pad="3px 0 0 4px">{renderTools(topTools, <Sep />)}</ToolRow>
      <ToolRow $h={37} $pad="0 0 0 5px">
        <Combo $w={158}><ComboText>Track: use netclass width</ComboText><Chevron /></Combo>
        <ToolButton $on><svg width="24" height="24" viewBox="0 0 24 24"><path d="M3 3v15a3 3 0 0 0 3 3h12a3 3 0 0 0 3-3V3" fill="none" stroke={G} strokeWidth="1.500" /><path d="M9 9h6M9 12h6" stroke={G} /><circle cx="12" cy="21" r="2.500" fill={B} /></svg></ToolButton>
        <Sep />
        <Combo $w={150} $ml={2}><ComboText>Via: use netclass sizes</ComboText><Chevron /></Combo>
        <Sep />
        <Combo $w={137} $ml={2}><Swatch $c="#c83434" /><ComboText>F.Cu (PgUp)</ComboText><Chevron /></Combo>
        <PairSwatch><svg width="24" height="24" viewBox="0 0 24 24"><rect width="24" height="24" fill="#c83434" /><path d="M24 0v24H8z" fill="#4d7fc4" /><path d="M22 0L5 24M24 0L7 24" stroke="#fff" strokeWidth="1" /><path d="M23 0L6 24" stroke="#222" strokeWidth="1" /></svg></PairSwatch>
        <Sep />
        <Combo $w={148} $ml={5}><ComboText>0.0500 mm (0.0020 in)</ComboText><Chevron /></Combo>
        <Sep />
        <Combo $w={95} $ml={3}><ComboText>Zoom 2.20</ComboText><Chevron /></Combo>
      </ToolRow>
      <Main>
        <SideBar $w={34}>{renderTools(leftTools, <HSep />)}</SideBar>
        <Canvas><Board /></Canvas>
        <SideBar $w={37}>{renderTools(rightTools, <HSep />)}</SideBar>
        <Panel>
          <PanelHead>Appearance</PanelHead>
          <Tabs>
            <Tab $on $w={50}>Layers</Tab>
            <Tab $w={51}>Objects</Tab>
            <Tab $w={46}>Nets</Tab>
          </Tabs>
          <TabBody>
            <LayerList>
              {layers.map((l, i) => (
                <LayerRow key={l.n} $on={i === 0}>
                  <Arrow $on={i === 0} />
                  <LayerSwatch $c={l.c} $check={l.k} />
                  <Eye />
                  <LayerName>{l.n}</LayerName>
                </LayerRow>
              ))}
              <ScrollThumb />
            </LayerList>
            <Options>
              <OptHead>Layer Display Options</OptHead>
              <OptLabel>Inactive layers (H):</OptLabel>
              <RadioRow>
                <RadioItem $w={79}><Radio $on />Normal</RadioItem>
                <RadioItem $w={62}><Radio />Dim</RadioItem>
                <RadioItem $w={50}><Radio />Hide</RadioItem>
              </RadioRow>
              <Rule />
              <FlipRow><CheckBox />Flip board view</FlipRow>
            </Options>
          </TabBody>
          <FieldLabel $mt={12}>Presets (Ctrl+Tab):</FieldLabel>
          <PanelCombo $w={205}><ComboText>All Layers</ComboText><Chevron /></PanelCombo>
          <FieldLabel $mt={3}>Viewports (Shift+Tab):</FieldLabel>
          <PanelCombo $w={205}><ComboText>---</ComboText><Chevron /></PanelCombo>
          <PanelHead $mt={10}>Selection Filter</PanelHead>
          <FilterGrid>
            {filters.map(([t, on]) => (
              <FilterItem key={t}><CheckBox $on={on}>{on && <Tick />}</CheckBox>{t}</FilterItem>
            ))}
          </FilterGrid>
        </Panel>
      </Main>
      <MsgPanel>
        {msgs.map(([a, b, w]) => <MsgCol key={a} $w={w}>{a}<br />{b}</MsgCol>)}
      </MsgPanel>
      <StatusBar>
        {status.map(([t, w, fs], i) => <StatusCell key={i} $w={w} $fs={fs} $first={i === 0}>{t}</StatusCell>)}
      </StatusBar>
      <Taskbar />
    </Shell>
  );
}
